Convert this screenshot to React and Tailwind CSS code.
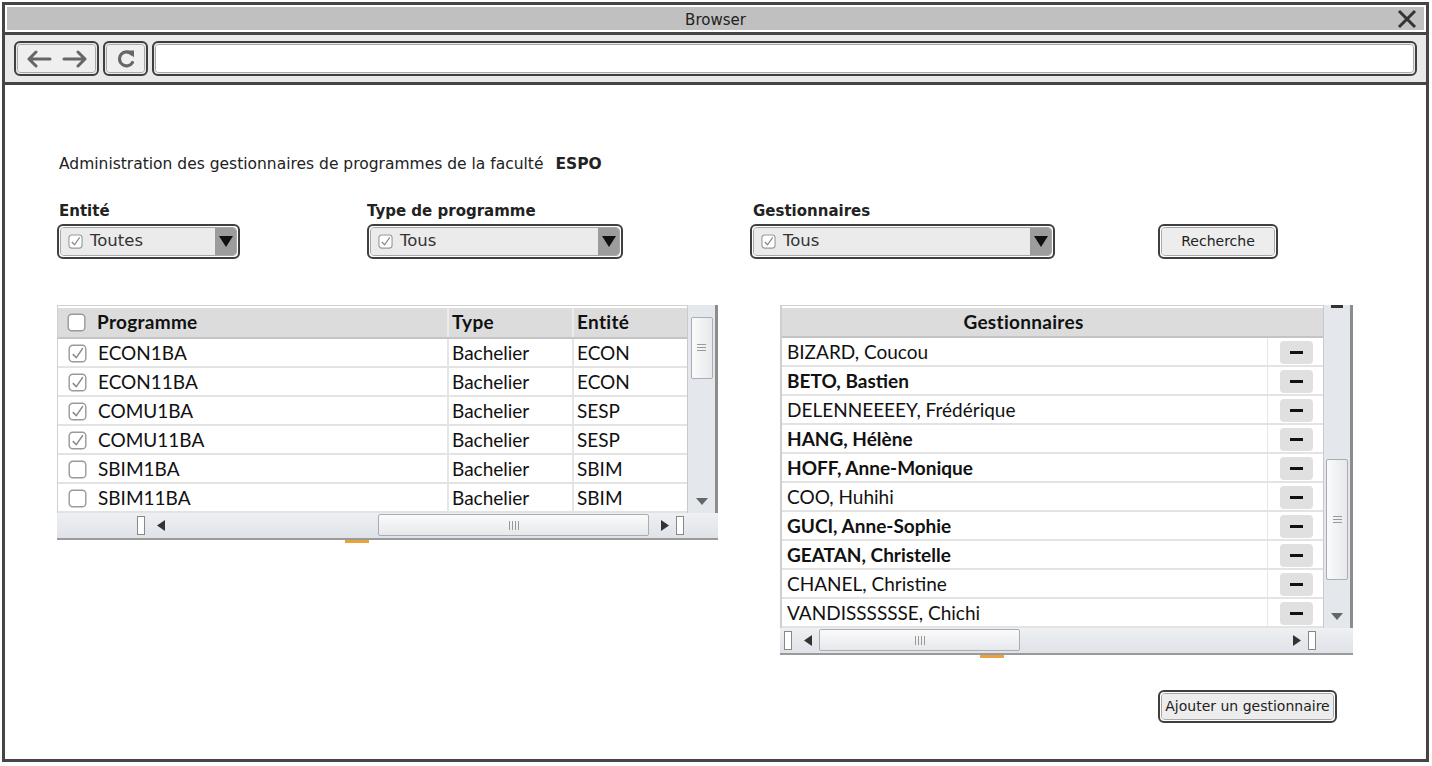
import React from 'react';

const sketch = { fontFamily: '"Comic Sans MS", "DejaVu Sans", sans-serif' };
const office = { fontFamily: 'Lato, "Open Sans", sans-serif' };

const programmes = [
  { code: 'ECON1BA', type: 'Bachelier', entite: 'ECON', checked: true },
  { code: 'ECON11BA', type: 'Bachelier', entite: 'ECON', checked: true },
  { code: 'COMU1BA', type: 'Bachelier', entite: 'SESP', checked: true },
  { code: 'COMU11BA', type: 'Bachelier', entite: 'SESP', checked: true },
  { code: 'SBIM1BA', type: 'Bachelier', entite: 'SBIM', checked: false },
  { code: 'SBIM11BA', type: 'Bachelier', entite: 'SBIM', checked: false },
];

const gestionnaires = [
  { last: 'BIZARD', first: 'Coucou', bold: false },
  { last: 'BETO', first: 'Bastien', bold: true },
  { last: 'DELENNEEEEY', first: 'Frédérique', bold: false },
  { last: 'HANG', first: 'Hélène', bold: true },
  { last: 'HOFF', first: 'Anne-Monique', bold: true },
  { last: 'COO', first: 'Huhihi', bold: false },
  { last: 'GUCI', first: 'Anne-Sophie', bold: true },
  { last: 'GEATAN', first: 'Christelle', bold: true },
  { last: 'CHANEL', first: 'Christine', bold: false },
  { last: 'VANDISSSSSSE', first: 'Chichi', bold: false },
];

function CheckIcon({ checked, size = 16 }) {
  return (
    <svg width={size} height={size} viewBox="0 0 16 16" className="shrink-0">
      <rect x="1" y="1" width="14" height="14" rx="3" fill="#fff" stroke="#9a9a9a" strokeWidth="1.2" />
      {checked && <path d="M4 8.5 L7 11.5 L12.5 3.5" fill="none" stroke="#8a8a8a" strokeWidth="1.3" />}
    </svg>
  );
}

function SketchBox({ className = '', children }) {
  return (
    <div className={`rounded-[6px] border-2 border-[#3f3f3f] p-px ${className}`}>
      <div className="h-full w-full overflow-hidden rounded-[4px] border border-[#a8a8a8]">{children}</div>
    </div>
  );
}

function Select({ width, value }) {
  return (
    <SketchBox className={`h-[35px] ${width}`}>
      <div className="flex h-full bg-[#ebebeb]">
        <div className="flex flex-1 items-center gap-[7px] pl-[7px]">
          <CheckIcon checked size={15} />
          <span className="text-[16.5px] text-[#333]" style={sketch}>{value}</span>
        </div>
        <div className="flex w-[21px] items-center justify-center bg-[#9c9c9c]">
          <svg width="14" height="12" viewBox="0 0 14 12">
            <path d="M0 1 H14 L7 12 Z" fill="#111" />
          </svg>
        </div>
      </div>
    </SketchBox>
  );
}

function SketchButton({ className = '', label }) {
  return (
    <SketchBox className={className}>
      <div className="flex h-full items-center justify-center bg-[#ededed] text-[14px] text-[#222]" style={sketch}>
        {label}
      </div>
    </SketchBox>
  );
}

function Grip({ vertical }) {
  const line = vertical ? 'h-px w-[9px] bg-[#999]' : 'h-[9px] w-px bg-[#999]';
  return (
    <div className={`flex items-center gap-[2px] ${vertical ? 'flex-col' : ''}`}>
      <div className={line} />
      <div className={line} />
      <div className={line} />
      {!vertical && <div className={line} />}
    </div>
  );
}

function HScroll({ leftBox, thumbLeft, thumbWidth, rightArrowGap }) {
  return (
    <div className="flex h-[27px] items-center border-b-2 border-[#9a9a9a] bg-gradient-to-b from-[#eef0f3] to-[#dfe2e7]">
      <div className={`${leftBox} h-[19px] w-[8px] border border-[#888] bg-white`} />
      <svg width="8" height="11" viewBox="0 0 8 11" className="ml-[12px]">
        <path d="M8 0 V11 L0 5.5 Z" fill="#333" />
      </svg>
      <div className={`${thumbLeft} flex h-[22px] ${thumbWidth} items-center justify-center rounded-[2px] border border-[#a9adb3] bg-gradient-to-b from-[#fbfbfb] to-[#e6e8eb]`}>
        <Grip />
      </div>
      <svg width="8" height="11" viewBox="0 0 8 11" className={rightArrowGap}>
        <path d="M0 0 V11 L8 5.5 Z" fill="#333" />
      </svg>
      <div className="ml-[7px] h-[19px] w-[8px] border border-[#888] bg-white" />
    </div>
  );
}

function DownArrow() {
  return (
    <svg width="12" height="7" viewBox="0 0 12 7">
      <path d="M0 0 H12 L6 7 Z" fill="#666" />
    </svg>
  );
}

function ProgrammesTable() {
  return (
    <div className="w-[661px]" style={office}>
      <div className="flex">
        <div className="w-[630px] border-t border-l border-[#cfcfcf] pt-[2px]">
          <div className="grid h-[31px] grid-cols-[389px_125px_116px] border-b-2 border-[#c4c4c4] bg-[#dcdcdc] text-[19px] font-bold tracking-[0.3px] text-[#111]">
            <div className="flex items-center gap-[11px] pl-[9px]">
              <CheckIcon checked={false} size={19} />
              <span>Programme</span>
            </div>
            <div className="flex items-center border-l-2 border-[#ececec] pl-[3px]">Type</div>
            <div className="flex items-center border-l-2 border-[#ececec] pl-[3px]">Entité</div>
          </div>
          {programmes.map((p) => (
            <div key={p.code} className="grid h-[29px] grid-cols-[389px_125px_116px] border-b-2 border-[#e3e3e3] bg-white text-[19px] text-[#111]">
              <div className="flex items-center gap-[11px] pl-[10px]">
                <CheckIcon checked={p.checked} size={19} />
                <span>{p.code}</span>
              </div>
              <div className="flex items-center border-l-2 border-[#e6e6e6] pl-[3px]">{p.type}</div>
              <div className="flex items-center border-l-2 border-[#e6e6e6] pl-[3px]">{p.entite}</div>
            </div>
          ))}
        </div>
        <div className="flex w-[28px] flex-col items-center border-l border-[#c9c9c9] bg-[#e4e7ec] pt-[12px] pb-[8px]">
          <div className="flex h-[62px] w-[22px] items-center justify-center rounded-[2px] border border-[#a9adb3] bg-gradient-to-r from-[#fbfbfb] to-[#e6e8eb]">
            <Grip vertical />
          </div>
          <div className="flex-1" />
          <DownArrow />
        </div>
        <div className="w-[3px] bg-[#8c8c8c]" />
      </div>
      <HScroll leftBox="ml-[80px]" thumbLeft="ml-[213px]" thumbWidth="w-[271px]" rightArrowGap="ml-[12px]" />
      <div className="ml-[288px] h-[3px] w-[24px] bg-[#e8a33a]" />
    </div>
  );
}

function GestionnairesTable() {
  return (
    <div className="w-[573px]" style={office}>
      <div className="flex">
        <div className="w-[543px] border-l-2 border-t border-[#cfcfcf] pt-[2px]">
          <div className="flex h-[30px] items-center justify-center border-b-2 border-[#c4c4c4] bg-[#dcdcdc] text-[19px] font-bold tracking-[0.3px] text-[#111]">
            <span className="ml-[-58px]">Gestionnaires</span>
          </div>
          {gestionnaires.map((g) => (
            <div key={g.last} className="grid h-[29px] grid-cols-[485px_58px] border-b-2 border-[#e3e3e3] bg-white text-[19px] text-[#111]">
              <div className={`flex items-center pl-[5px] ${g.bold ? 'font-bold' : ''}`}>
                {g.last}, {g.first}
              </div>
              <div className="flex items-center justify-center border-l border-[#e6e6e6]">
                <div className="flex h-[23px] w-[33px] items-center justify-center rounded-[4px] bg-[#e0e0e0]">
                  <div className="h-[3px] w-[13px] bg-[#111]" />
                </div>
              </div>
            </div>
          ))}
        </div>
        <div className="flex w-[27px] flex-col items-center border-l border-[#c9c9c9] bg-[#e4e7ec] pb-[8px]">
          <div className="h-[3px] w-[12px] bg-[#333]" />
          <div className="mt-[151px] flex h-[121px] w-[22px] items-center justify-center rounded-[2px] border border-[#a9adb3] bg-gradient-to-r from-[#fbfbfb] to-[#e6e8eb]">
            <Grip vertical />
          </div>
          <div className="flex-1" />
          <DownArrow />
        </div>
        <div className="w-[3px] bg-[#8c8c8c]" />
      </div>
      <HScroll leftBox="ml-[4px]" thumbLeft="ml-[7px]" thumbWidth="w-[201px]" rightArrowGap="ml-[273px]" />
      <div className="ml-[200px] h-[3px] w-[24px] bg-[#e8a33a]" />
    </div>
  );
}

export default function App() {
  return (
    <div className="h-[766px] w-[1432px] bg-white pt-[2px] pl-[2px]">
      <div className="flex h-[760px] w-[1427px] flex-col border-[3px] border-[#454545] bg-white">
        {/* title bar */}
        <div className="relative flex h-[27px] items-center justify-center border-2 border-white bg-[#c0c0c0] pt-[3px]">
          <span className="text-[15px] text-[#222]" style={sketch}>Browser</span>
          <svg width="20" height="20" viewBox="0 0 20 20" className="absolute right-[7px] top-[2px]">
            <path d="M2 2 L18 18 M18 2 L2 18" stroke="#333" strokeWidth="3" />
          </svg>
        </div>
        {/* toolbar */}
        <div className="flex h-[53px] items-center gap-[4px] border-y-[3px] border-[#454545] bg-[#e9e9e9] pl-[9px] pr-[9px]">
          <SketchBox className="h-[35px] w-[85px]">
            <div className="flex h-full items-center justify-center gap-[10px] bg-[#efefef]">
              <svg width="26" height="18" viewBox="0 0 26 18">
                <path d="M24 9 H3 M10 2 L3 9 L10 16" fill="none" stroke="#666" strokeWidth="3" strokeLinecap="round" strokeLinejoin="round" />
              </svg>
              <svg width="26" height="18" viewBox="0 0 26 18">
                <path d="M2 9 H23 M16 2 L23 9 L16 16" fill="none" stroke="#666" strokeWidth="3" strokeLinecap="round" strokeLinejoin="round" />
              </svg>
            </div>
          </SketchBox>
          <SketchBox className="h-[35px] w-[45px]">
            <div className="flex h-full items-center justify-center bg-[#efefef]">
              <svg width="22" height="22" viewBox="0 0 22 22">
                <path d="M16.5 6 A7 7 0 1 0 17.5 14.5" fill="none" stroke="#666" strokeWidth="3.2" strokeLinecap="round" />
                <path d="M12 2.5 L19 2.5 L19 9.5 Z" fill="#666" />
              </svg>
            </div>
          </SketchBox>
          <SketchBox className="h-[35px] flex-1">
            <div className="h-full bg-white" />
          </SketchBox>
        </div>
        {/* content */}
        <div className="flex-1 pl-[52px] pt-[68px]">
          <div className="flex items-baseline text-[15.5px] text-[#222]" style={sketch}>
            <span className="ml-[2px]">Administration des gestionnaires de programmes de la faculté</span>
            <span className="ml-[12px] font-bold">ESPO</span>
          </div>

          <div className="mt-[24px] flex items-end">
            <div className="w-[310px]">
              <div className="mb-[1px] ml-[2px] text-[15px] font-bold text-[#222]" style={sketch}>Entité</div>
              <Select width="w-[183px]" value="Toutes" />
            </div>
            <div className="w-[383px]">
              <div className="mb-[1px] text-[15px] font-bold text-[#222]" style={sketch}>Type de programme</div>
              <Select width="w-[256px]" value="Tous" />
            </div>
            <div className="w-[408px]">
              <div className="mb-[1px] ml-[3px] text-[15px] font-bold text-[#222]" style={sketch}>Gestionnaires</div>
              <Select width="w-[305px]" value="Tous" />
            </div>
            <SketchButton className="h-[35px] w-[120px]" label="Recherche" />
          </div>

          <div className="mt-[46px] flex items-start">
            <ProgrammesTable />
            <div className="w-[62px]" />
            <GestionnairesTable />
          </div>

          <div className="mt-[32px] flex">
            <div className="w-[1101px]" />
            <SketchButton className="h-[33px] w-[179px]" label="Ajouter un gestionnaire" />
          </div>
        </div>
      </div>
    </div>
  );
}
